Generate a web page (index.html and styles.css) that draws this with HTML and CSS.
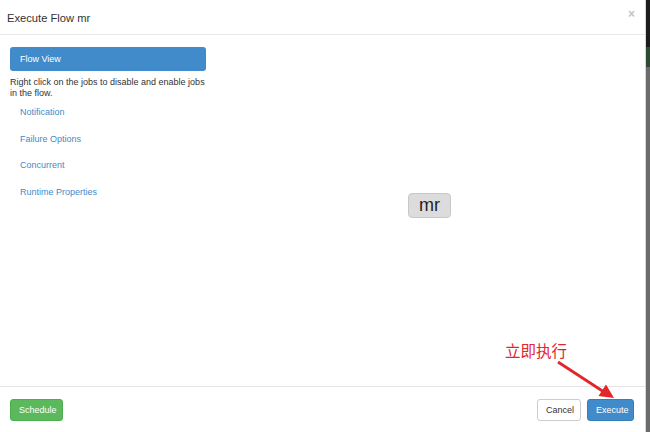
FILE: index.html
```html
<!DOCTYPE html>
<html lang="en">
<head>
    <meta charset="UTF-8">
    <title>Execute Flow</title>
    <link rel="stylesheet" href="styles.css">
</head>
<body>
    <div class="screen">
        <div class="modal">
            <div class="modal-header">
                <h4 class="modal-title">Execute Flow mr</h4>
                <span class="close">&times;</span>
            </div>
            <div class="modal-body">
                <div class="sidebar">
                    <div class="nav-active">Flow View</div>
                    <p class="hint">Right click on the jobs to disable and enable jobs in the flow.</p>
                    <ul class="nav-links">
                        <li><a href="#">Notification</a></li>
                        <li><a href="#">Failure Options</a></li>
                        <li><a href="#">Concurrent</a></li>
                        <li><a href="#">Runtime Properties</a></li>
                    </ul>
                </div>
                <div class="graph">
                    <div class="node">mr</div>
                </div>
            </div>
            <div class="modal-footer">
                <button class="btn btn-success">Schedule</button>
                <div class="footer-right">
                    <button class="btn btn-default">Cancel</button>
                    <button class="btn btn-primary">Execute</button>
                </div>
            </div>

            <!-- red annotation pointing at Execute -->
            <div class="note">立即执行</div>
            <svg class="note-arrow" width="70" height="50" viewBox="0 0 70 50">
                <line x1="8" y1="7" x2="54" y2="37" stroke="#e3262b" stroke-width="2.8"/>
                <polygon points="64,43 48.5,41 56,29.5" fill="#e3262b"/>
            </svg>
        </div>
        <div class="backdrop">
            <div class="bd-dark"></div>
            <div class="bd-green"></div>
        </div>
    </div>
</body>
</html>
```

FILE: styles.css
```css
body {
    margin: 0;
    font-family: "Liberation Sans", Arial, sans-serif;
    font-size: 9px;
    color: #333;
    background: #6b6b6b;
}
.screen {
    display: flex;
    width: 650px;
    height: 432px;
}
.modal {
    position: relative;
    width: 645px;
    display: flex;
    flex-direction: column;
    background: #fff;
    border-right: 1px solid #d8d8d8;
}
.modal-header {
    height: 34px;
    display: flex;
    align-items: center;
    justify-content: space-between;
    padding: 0 10px 0 7px;
    border-bottom: 1px solid #e8e8e8;
}
.modal-title {
    margin: 0;
    font-size: 11.2px;
    font-weight: normal;
    color: #333;
    padding-top: 1px;
}
.close {
    font-size: 12px;
    font-weight: bold;
    color: #c4c4c4;
    margin-top: -7px;
}
.modal-body {
    position: relative;
    flex: 1;
    display: flex;
    padding: 12px 10px 0;
}
.sidebar {
    width: 196px;
}
.nav-active {
    height: 24px;
    line-height: 24px;
    padding-left: 10px;
    background: #428bca;
    color: #fff;
    border-radius: 3px;
}
.hint {
    margin: 6px 0 0;
    line-height: 11px;
}
.nav-links {
    list-style: none;
    margin: 0;
    padding: 0;
}
.nav-links li {
    height: 26.5px;
    line-height: 26.5px;
    padding-left: 10px;
}
.nav-links a {
    color: #428bca;
    text-decoration: none;
}
.graph {
    flex: 1;
}
.node {
    position: absolute;
    left: 408px;
    top: 158px;
    width: 41px;
    height: 23px;
    line-height: 23px;
    text-align: center;
    font-size: 18px;
    color: #222;
    background: #dcdcdc;
    border: 1px solid #c8c8c8;
    border-radius: 4px;
}
.modal-footer {
    height: 33px;
    display: flex;
    justify-content: space-between;
    align-items: flex-start;
    padding: 12px 11px 0 10px;
    border-top: 1px solid #e5e5e5;
}
.footer-right {
    display: flex;
    gap: 6px;
}
.btn {
    height: 22px;
    padding: 0 8px;
    font-family: "Liberation Sans", Arial, sans-serif;
    font-size: 9px;
    border-radius: 3px;
    border: 1px solid transparent;
    cursor: pointer;
}
.btn-success {
    width: 53px;
    background: #5cb85c;
    border-color: #4cae4c;
    color: #fff;
}
.btn-default {
    width: 44px;
    background: #fff;
    border-color: #ccc;
    color: #333;
}
.btn-primary {
    width: 47px;
    background: #428bca;
    border-color: #357ebd;
    color: #fff;
}
.note {
    position: absolute;
    left: 505px;
    top: 340px;
    font-family: "Noto Sans CJK SC", sans-serif;
    font-size: 15.5px;
    line-height: 20px;
    color: #e3262b;
}
.note-arrow {
    position: absolute;
    left: 550px;
    top: 355px;
}
.backdrop {
    flex: 1;
    background: #6b6b6b;
}
.bd-dark {
    height: 47px;
    background: #1c1c1c;
}
.bd-green {
    height: 20px;
    background: #2f4a33;
}
```
